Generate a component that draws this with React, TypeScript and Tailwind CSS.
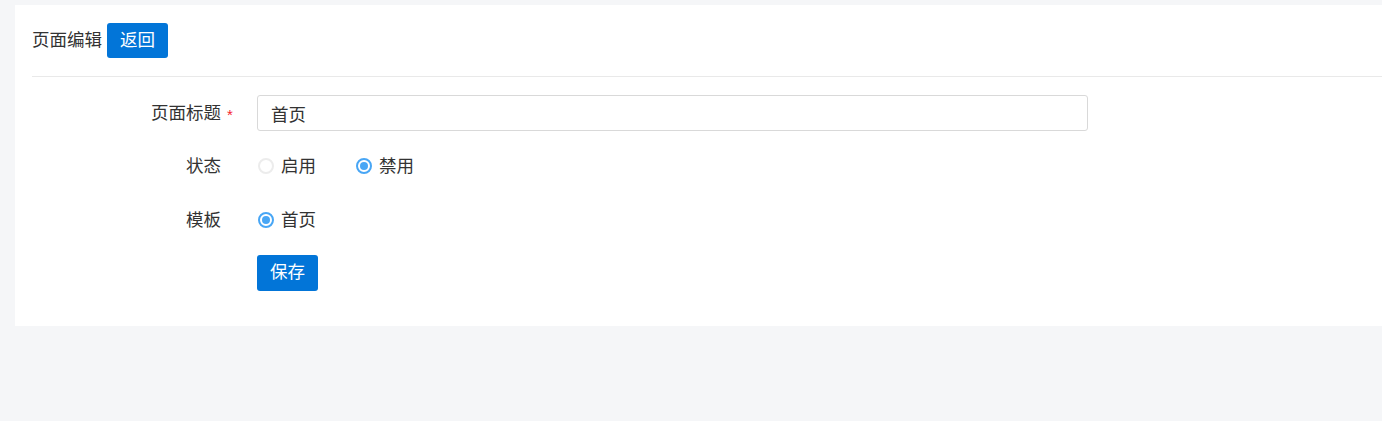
import React, { useState } from 'react';

const Radio: React.FC<{ checked: boolean; label: string; onClick: () => void }> = ({ checked, label, onClick }) => (
  <label className="flex items-center gap-[7px] cursor-pointer" onClick={onClick}>
    {checked ? (
      <span className="flex h-4 w-4 items-center justify-center rounded-full border-2 border-[#48a6f5] bg-white">
        <span className="h-2 w-2 rounded-full bg-[#48a6f5]" />
      </span>
    ) : (
      <span className="h-4 w-4 rounded-full border-2 border-[#ececec] bg-white" />
    )}
    <span>{label}</span>
  </label>
);

const App: React.FC = () => {
  const [title, setTitle] = useState('首页');
  const [status, setStatus] = useState<'on' | 'off'>('off');

  return (
    <div
      className="min-h-[421px] bg-[#f5f6f8] pt-[5px] pl-[15px] text-[17.5px] text-[#333]"
      style={{ fontFamily: '"Liberation Sans", "Noto Sans CJK SC", sans-serif' }}
    >
      <div className="bg-white pl-[17px] pb-[35px]">
        <div className="flex items-center gap-[5px] py-[18px]">
          <span className="leading-none">页面编辑</span>
          <button className="h-[35px] rounded-[3px] bg-[#0275d8] px-[13px] leading-none text-white">返回</button>
        </div>
        <div className="h-px bg-[#e9e9e9]" />

        <div className="mt-[18px] flex items-center">
          <div className="w-[189px] text-right">
            <span className="relative">
              页面标题
              <span className="absolute left-full top-[1px] ml-[6px] text-[15px] text-[#f5222d]">*</span>
            </span>
          </div>
          <input
            value={title}
            onChange={(e) => setTitle(e.target.value)}
            className="ml-[36px] h-9 w-[831px] rounded-[3px] border border-[#d9d9d9] px-[13px] text-[17.5px] text-[#333] outline-none"
          />
        </div>

        <div className="mt-[17px] flex h-9 items-center">
          <div className="w-[189px] text-right">状态</div>
          <div className="ml-[37px] flex items-center gap-[40px]">
            <Radio checked={status === 'on'} label="启用" onClick={() => setStatus('on')} />
            <Radio checked={status === 'off'} label="禁用" onClick={() => setStatus('off')} />
          </div>
        </div>

        <div className="mt-[18px] flex h-9 items-center">
          <div className="w-[189px] text-right">模板</div>
          <div className="ml-[37px]">
            <Radio checked label="首页" onClick={() => {}} />
          </div>
        </div>

        <div className="mt-[17px] flex">
          <button className="ml-[225px] h-9 rounded-[3px] bg-[#0275d8] px-[13px] leading-none text-white">保存</button>
        </div>
      </div>
    </div>
  );
};

export default App;
